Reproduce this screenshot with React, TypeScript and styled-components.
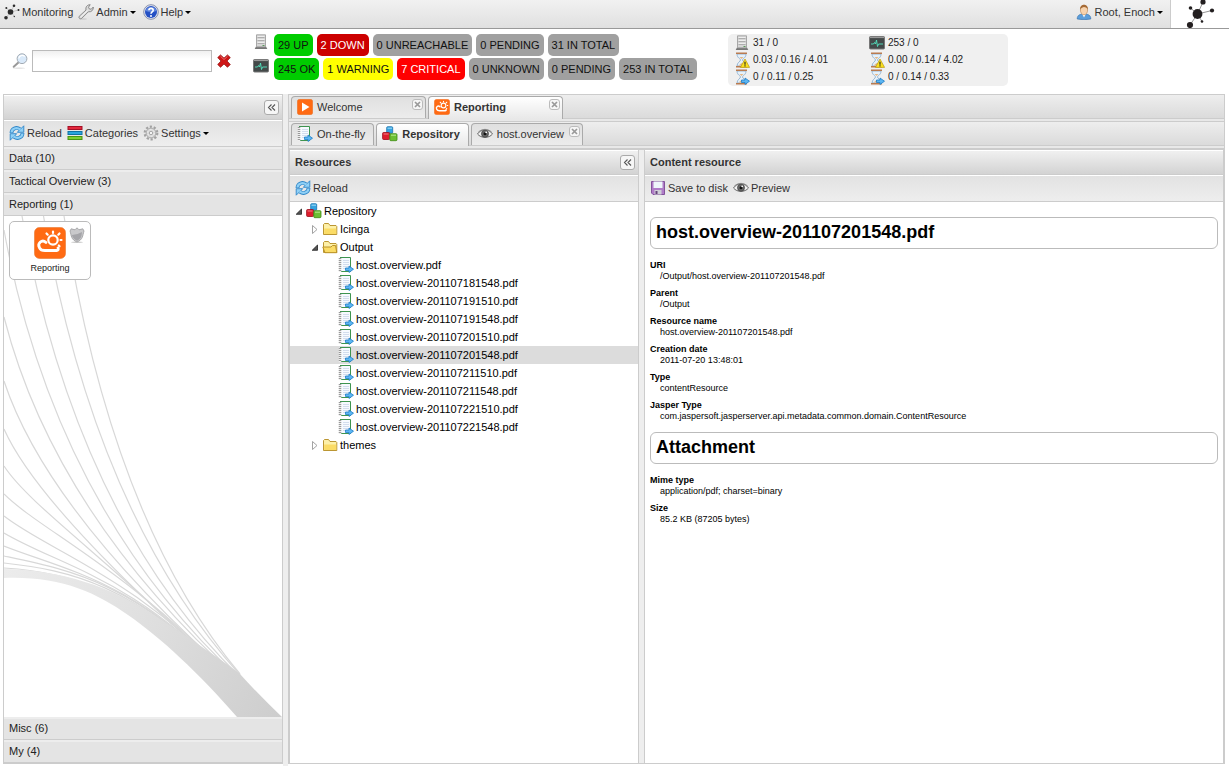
import React from "react";
import styled, { createGlobalStyle, css } from "styled-components";

const GlobalStyle = createGlobalStyle`
  *, *::before, *::after { box-sizing: border-box; }
  body {
    margin: 0;
    background: #fff;
    color: #222;
    font: 11px/14px "Liberation Sans", Arial, sans-serif;
  }
  button, input { font: inherit; color: inherit; }
  button {
    margin: 0;
    padding: 0;
    border: 0;
    background: none;
    cursor: pointer;
    white-space: nowrap;
  }
  svg { display: block; flex: none; }
  ul { list-style: none; margin: 0; padding: 0; }
`;

/* ---------- icons ---------- */

const Svg = ({ size = 16, box = "0 0 16 16", children }: { size?: number; box?: string; children: React.ReactNode }) => (
  <svg width={size} height={size} viewBox={box} fill="none" aria-hidden="true">
    {children}
  </svg>
);

const NetworkIcon = () => (
  <Svg>
    <path d="M7 8L10 1.500M7 8L14.500 6M7 8L2 13.500M7 8L2.500 4M7 8L10 12" stroke="#aaa" strokeWidth=".6" />
    <g fill="#2a2a2a">
      <circle cx="6.500" cy="8" r="2.800" />
      <circle cx="10" cy="1.800" r="1.300" />
      <circle cx="14.500" cy="6" r="1" />
      <circle cx="2" cy="13.800" r="1.800" />
      <circle cx="2.300" cy="4" r="1" />
      <circle cx="10.300" cy="12.500" r=".7" />
    </g>
  </Svg>
);

const BrandLogo = () => (
  <svg width="30" height="28" viewBox="0 0 30 28" fill="none" role="img" aria-label="Icinga">
    <path d="M11.500 14L17 2M11.500 14L26 10.500M11.500 14L4 25M11.500 14L4.500 8M11.500 14L16 21.500" stroke="#888" strokeWidth=".9" />
    <g fill="#231f20">
      <circle cx="11.500" cy="14" r="4.900" />
      <circle cx="17" cy="2" r="2.600" />
      <circle cx="26" cy="10.500" r="2.100" />
      <circle cx="4" cy="25" r="3.100" />
      <circle cx="4.500" cy="8" r="1.800" />
      <circle cx="16" cy="21.500" r="1.300" />
    </g>
  </svg>
);

const WrenchIcon = () => (
  <Svg>
    <ellipse cx="5" cy="15" rx="4" ry=".7" fill="#ccc" />
    <path d="M1.200 12.300L8 6C7.400 3 9 .8 12.200.7L10.500 3.200L11.400 5L13.300 5.200L15.300 3C15.600 6 13.500 8.200 10.300 7.800L3.600 14.500C2 15.400.2 13.800 1.200 12.300Z" fill="#dcdcdc" stroke="#808080" strokeWidth=".9" />
    <path d="M2.700 13L9.500 6.500" stroke="#f8f8f8" strokeWidth=".8" />
  </Svg>
);

const HelpIcon = () => (
  <Svg>
    <circle cx="8" cy="8" r="7.300" fill="#e4e8f2" stroke="#7c86a4" strokeWidth=".9" />
    <circle cx="8" cy="8" r="6" fill="#2450c4" />
    <path d="M2.600 7A5.500 5 0 0 1 13.400 7Q8 9 2.600 7Z" fill="#6087df" />
    <path d="M5.900 6.200C6 3.700 10.200 3.700 10.200 6.200C10.200 7.800 8 7.900 8 9.700" stroke="#fff" strokeWidth="1.600" />
    <circle cx="8" cy="11.900" r="1" fill="#fff" />
  </Svg>
);

const UserIcon = () => (
  <Svg>
    <path d="M1.200 15C1.200 11 4 10 8 10S14.800 11 14.800 15Q8 16.500 1.200 15Z" fill="#5b9edb" stroke="#2f6ca8" strokeWidth=".6" />
    <path d="M6.200 10L8 13.500L9.800 10Z" fill="#fff" />
    <ellipse cx="8" cy="6" rx="3.600" ry="4.800" fill="#f6d3ae" stroke="#b58250" strokeWidth=".6" />
    <path d="M4.100 5.600C3.500-.8 12.500-.8 11.900 5.600C11 3.200 9 3.300 8 3C7 3.500 5 3.600 4.100 5.600Z" fill="#a56a35" />
  </Svg>
);

const SearchIcon = () => (
  <Svg>
    <ellipse cx="7" cy="15.200" rx="6" ry=".6" fill="#ddd" />
    <path d="M6.400 9.500L1.700 13.800" stroke="#999" strokeWidth="2" strokeLinecap="round" />
    <circle cx="10" cy="5.700" r="4.900" fill="#d9e9f9" stroke="#a3abb3" />
    <path d="M6.800 5.500A3.400 3.400 0 0 1 12.700 3.500" stroke="#fff" strokeWidth="1.200" />
  </Svg>
);

const CrossIcon = () => (
  <Svg size={14}>
    <path d="M4 1L8 4.700L12 1L15.200 4.100L11.500 8L15.200 12L12 15.200L8 11.500L4 15.200L.8 12L4.500 8L.8 4.100Z" fill="#cf1717" stroke="#8d0c0c" strokeWidth=".8" />
    <path d="M4 2.600L8 6.300L12 2.600" stroke="#ee7a7a" strokeWidth="1" />
  </Svg>
);

const ServerIcon = () => (
  <Svg>
    <path d="M3 12.500H13L14.300 15H1.700Z" fill="#777" />
    <path d="M3.500.8H12.500V12.800H3.500Z" fill="#d6d6d6" stroke="#a0a0a0" strokeWidth=".9" />
    <path d="M4.500 3.500H11.500M4.500 6.500H11.500M4.500 9.500H11.500" stroke="#aeaeae" />
    <path d="M4.500 2.500H11.500M4.500 5.500H11.500M4.500 8.500H11.500" stroke="#eee" />
    <path d="M9.500 11.500H11.500" stroke="#5a9a5a" />
  </Svg>
);

const MonitorIcon = () => (
  <Svg>
    <rect x=".5" y="1.500" width="15" height="12.500" rx="1" fill="#434949" stroke="#777" />
    <path d="M1 2.500H15" stroke="#999" strokeWidth="1.200" />
    <path d="M2 9H4.500L5.500 7.500L6.500 9L7.500 5L8.500 11.500L9.500 9H14" stroke="#54e3bf" strokeWidth=".9" />
  </Svg>
);

const HourglassShape = () => (
  <>
    <path d="M3 2C3 6 6.500 6.500 6.500 8S3 10.500 3 14H12C12 10.500 8.500 9.500 8.500 8S12 6 12 2Z" fill="#e6f1fa" stroke="#8fb0cf" strokeWidth=".9" />
    <path d="M5.500 5H9.500L7.500 7ZM4.500 13.500L7.500 11L10.500 13.500Z" fill="#e4b98a" />
    <path d="M2 1.300H13M2 14.700H13" stroke="#b97b50" strokeWidth="1.500" />
  </>
);

const BlueArrow = () => (
  <path d="M7.500 11H11V9L15.500 12.200L11 15.500V13.500H7.500Z" fill="#5cb6f2" stroke="#1d7cc8" strokeWidth=".8" />
);

const HourglassWarningIcon = () => (
  <Svg>
    <HourglassShape />
    <path d="M11 7L15.600 15.400H6.400Z" fill="#fbe11c" stroke="#b89a12" strokeWidth=".7" />
    <path d="M11 9.700V12.700M11 13.300V14.500" stroke="#222" strokeWidth="1.100" />
  </Svg>
);

const HourglassArrowIcon = () => (
  <Svg>
    <HourglassShape />
    <BlueArrow />
  </Svg>
);

const ReloadIcon = () => (
  <Svg>
    <path d="M2.500 8C2.500 3.500 7.500 1.500 11 4.200M13.500 8C13.500 12.500 8.500 14.500 5 11.800" stroke="#2f86c8" strokeWidth="3.800" />
    <path d="M14.800.8V7.300H8.300ZM1.200 15.200V8.700H7.700Z" fill="#8fd0f6" stroke="#2f86c8" strokeWidth=".9" />
    <path d="M2.500 7.500C2.800 3.500 7.500 1.700 11.500 4.600M13.500 8.500C13.200 12.500 8.500 14.300 4.500 11.400" stroke="#8fd0f6" strokeWidth="2.200" />
  </Svg>
);

const CategoriesIcon = () => (
  <Svg>
    <rect x="1" y="1.500" width="14" height="3" fill="#e3283c" stroke="#a50f25" />
    <rect x="1" y="6.500" width="14" height="3" fill="#2aa5dc" stroke="#1173a4" />
    <rect x="1" y="11.500" width="14" height="3" fill="#7ed032" stroke="#4b9414" />
  </Svg>
);

const GearIcon = () => (
  <Svg>
    <circle cx="8" cy="8" r="6.300" stroke="#a2a2a2" strokeWidth="2.200" strokeDasharray="2.200 1.758" />
    <circle cx="8" cy="8" r="4.900" fill="#d8d8d8" stroke="#aaa" />
    <circle cx="8" cy="8" r="3.300" stroke="#f2f2f2" strokeWidth=".9" strokeDasharray="2 1.450" />
    <circle cx="8" cy="8" r="1.700" fill="#f4f4f4" stroke="#999" strokeWidth=".8" />
  </Svg>
);

const ShieldIcon = () => (
  <Svg>
    <ellipse cx="8" cy="15.200" rx="6" ry=".7" fill="#ccc" />
    <path d="M8 .8L10 2.800L13.800 1.800L15 4C13.500 9 14 12.500 8 15C2 12.500 2.500 9 1 4L2.200 1.800L6 2.800Z" fill="#c9c9cb" stroke="#9b9b9d" strokeWidth=".8" />
    <path d="M3 8Q8 8 13 5C12.500 9.500 12.500 11.500 8 13.700C4 11.700 3.500 10 3 8Z" fill="#a5a5a9" />
  </Svg>
);

const WeatherIcon = ({ size }: { size: number }) => (
  <Svg size={size} box="0 0 32 32">
    <rect x=".5" y=".5" width="31" height="31" rx="5" fill="#ff6a13" stroke="#e8772f" strokeWidth=".6" />
    <g stroke="#fff" strokeWidth="2.200" strokeLinecap="round">
      <circle cx="19" cy="13" r="4.700" />
      <path d="M19 4.500V6M12.500 6.500L13.700 7.700M25.500 6.500L24.300 7.700M26.500 13H27.500M24.800 18.500L25.500 19.300" />
      <path d="M12 15.500C8 11.500 3 16.500 5.500 20.800C6.500 23 9 23.500 11 23.500H22.500C24 23.300 24.800 22.300 24 21" strokeWidth="2.800" />
    </g>
  </Svg>
);

const PlayIcon = () => (
  <Svg>
    <rect x=".3" y=".3" width="15.400" height="15.400" rx="2.500" fill="#ff6a13" stroke="#e8772f" strokeWidth=".6" />
    <path d="M5 3.500L12.500 8L5 12.500Z" fill="#fff" />
  </Svg>
);

const NotebookIcon = () => (
  <Svg>
    <path d="M1.500.5H12.500V14.500H1.500Z" fill="#f7faff" />
    <path d="M2 .5H12.500V14.500H2" stroke="#3e9450" />
    <path d="M5 3.500H11M5 5.500H11M5 7.500H11M5 9.500H11M5 11.500H8" stroke="#d3ddee" />
    <path d="M2 1V15" stroke="#eee" strokeWidth="2.500" />
    <path d="M2 1V15" stroke="#999" strokeWidth="2.500" strokeDasharray="1 1" />
    <BlueArrow />
  </Svg>
);

const CubesIcon = () => (
  <Svg>
    <rect x="4.700" y=".7" width="6" height="6.500" rx="1" fill="#35a4e0" stroke="#1b74b0" strokeWidth=".8" />
    <rect x=".6" y="6.500" width="7" height="7" rx="1" fill="#dd1f2d" stroke="#9a0d1c" strokeWidth=".8" />
    <rect x="7.800" y="7.700" width="7.200" height="7" rx="1" fill="#6cbf33" stroke="#3f8a14" strokeWidth=".8" />
    <path d="M5.500 2.200H10" stroke="#a3dbf7" />
    <path d="M1.600 8H6.500" stroke="#f28088" />
    <path d="M9 9.200H14" stroke="#b9e88e" />
  </Svg>
);

const EyeIcon = () => (
  <Svg>
    <path d="M.5 8C4 2.500 12 2.500 15.500 8C12 12.500 4 12.500 .5 8Z" fill="#f2f2f2" stroke="#666" />
    <path d="M1 6.500C4.500 2.300 11.500 2.300 15 6.500" stroke="#888" strokeWidth=".8" />
    <circle cx="8" cy="7.700" r="3.500" fill="#6a6a6a" stroke="#444" strokeWidth=".8" />
    <circle cx="8" cy="7.700" r="1.500" fill="#111" />
    <circle cx="9.200" cy="6.300" r=".9" fill="#fff" />
  </Svg>
);

const FloppyIcon = () => (
  <Svg>
    <path d="M1.500 1.500H14.500V14.500H3L1.500 13Z" fill="#b07cc8" stroke="#7b4a94" strokeWidth=".9" />
    <rect x="3.500" y="1.500" width="9" height="6.500" fill="#eef6fa" />
    <rect x="4.500" y="10" width="7" height="4.500" fill="#cfcfd6" />
    <rect x="5.500" y="11" width="2" height="3" fill="#64437a" />
  </Svg>
);

const FolderIcon = ({ open }: { open?: boolean }) => (
  <Svg>
    <path d="M1.500 13.500V3.500L2.500 2.500H6.500L8 4.500H14L14.800 5.500V13.500Z" fill="#fdf0a8" stroke="#b38a20" strokeWidth=".9" />
    {open ? (
      <path d="M.8 8H9L10.500 6.500H13.500L14.800 13.700H3Z" fill="#fbdc66" stroke="#b38a20" strokeWidth=".9" />
    ) : (
      <path d="M2.200 7.500H14.200V13H2.200Z" fill="#fbdc66" />
    )}
  </Svg>
);

const ExpanderIcon = ({ open }: { open?: boolean }) => (
  <Svg>
    {open ? (
      <path d="M11.500 6V11.300H6.200Z" fill="#555" stroke="#222" strokeWidth=".8" />
    ) : (
      <path d="M6.500 4.500L11 8.500L6.500 12.500Z" fill="#fff" stroke="#999" strokeWidth=".9" />
    )}
  </Svg>
);

const CollapseIcon = () => (
  <Svg size={9} box="0 0 9 9">
    <path d="M4.500 1.500L1.500 4.500L4.500 7.500M8 1.500L5 4.500L8 7.500" stroke="#555" strokeWidth="1.100" />
  </Svg>
);

const SmallCloseIcon = () => (
  <Svg size={7} box="0 0 7 7">
    <path d="M1 1L6 6M6 1L1 6" stroke="#999" strokeWidth="1.700" />
  </Svg>
);

/* ---------- shared parts ---------- */

const line = "#ccc";

const Page = styled.div`
  display: flex;
  flex-direction: column;
  min-height: 100vh;
`;

const ToolButton = styled.button<{ $menu?: boolean }>`
  display: flex;
  align-items: center;
  gap: 2px;
  color: #333;
  ${(p) =>
    p.$menu &&
    css`
      padding-right: 2px;
      &::after {
        content: "";
        border: 3px solid transparent;
        border-top-color: #000;
        border-bottom: 0;
      }
    `}
`;

const Toolbar = styled.div`
  display: flex;
  align-items: center;
  gap: 5px;
  height: 27px;
  padding: 0 5px 1px;
  border-top: 1px solid #fff;
  border-bottom: 1px solid ${line};
  background: linear-gradient(#e2e2e2, #eeeeee);
`;

const PanelHeader = styled.header`
  display: flex;
  align-items: center;
  justify-content: space-between;
  height: 25px;
  padding: 0 3px 0 5px;
  border-top: 1px solid #fff;
  border-bottom: 1px solid ${line};
  background: linear-gradient(#f0f0f0, #d3d3d3);
`;

const PanelTitle = styled.h2`
  margin: 0;
  padding-bottom: 2px;
  font-size: 11px;
  line-height: 14px;
  color: #333;
`;

const CollapseButton = styled.button`
  display: grid;
  place-items: center;
  width: 15px;
  height: 15px;
  margin-left: auto;
  border: 1px solid #aaa;
  border-radius: 3px;
  background: #f6f6f6;
`;

/* ---------- top bar ---------- */

const TopBar = styled.nav`
  display: flex;
  height: 29px;
  border-bottom: 1px solid #999;
  background: linear-gradient(#f1f1f1, #e0e0e0);
`;

const MenuGroup = styled.div`
  display: flex;
  align-items: center;
  gap: 5px;
  padding: 0 4px 4px;
  &:nth-child(2) {
    margin-left: auto;
    padding-right: 5px;
  }
`;

const Brand = styled.div`
  width: 59px;
  padding-left: 15px;
  border-left: 1px solid ${line};
  background: #fff;
`;

/* ---------- status header ---------- */

const StatusHeader = styled.header`
  display: flex;
  height: 65px;
  padding: 5px 12px 0;
`;

const SearchForm = styled.form`
  display: flex;
  align-items: center;
  gap: 4px;
  width: 241px;
  height: 54px;
`;

const SearchInput = styled.input`
  width: 180px;
  height: 22px;
  margin-right: 1px;
  border: 1px solid #bbb;
  padding: 1px 3px;
  background: linear-gradient(#f0f0f0, #fff 8px);
`;

const Summary = styled.div`
  display: flex;
  flex-direction: column;
  gap: 2px;
  width: 475px;
`;

const SummaryRow = styled.div`
  display: flex;
  gap: 4px;
  height: 22px;
  > svg {
    margin-right: 1px;
  }
`;

const badgeTones = {
  ok: ["#00cc00", "#111"],
  down: ["#cc0000", "#fff"],
  warning: ["#ffff00", "#111"],
  critical: ["#ff0000", "#fff"],
  muted: ["#a0a0a0", "#111"],
} as const;

const Badge = styled.button<{ $tone: keyof typeof badgeTones }>`
  padding: 0 4px;
  border-radius: 5px;
  background: ${(p) => badgeTones[p.$tone][0]};
  color: ${(p) => badgeTones[p.$tone][1]};
`;

const Performance = styled.div`
  display: grid;
  grid-template-columns: 135px 1fr;
  grid-auto-rows: 17px;
  width: 280px;
  height: 52px;
  padding: 0 6px;
  border-radius: 5px;
  background: #f0f0f0;
  font-size: 10px;
`;

const Metric = styled.span`
  display: flex;
  align-items: center;
  gap: 3px;
`;

/* ---------- frame ---------- */

const Main = styled.main`
  display: grid;
  grid-template-columns: 280px minmax(0, 1fr);
  gap: 5px;
  flex: 1;
  padding: 0 4px 2px 3px;
  background: linear-gradient(#eee, #eee) 283px 0 / 5px 100% no-repeat;
`;

const Sidebar = styled.aside`
  display: flex;
  flex-direction: column;
  border: 1px solid ${line};
`;

const AccordionRow = styled.button`
  flex: none;
  height: 23px;
  padding: 0 5px 2px;
  border-top: 2px solid #ededed;
  border-bottom: 1px solid ${line};
  background: #e4e4e4;
  text-align: left;
`;

const CronkBody = styled.div`
  position: relative;
  flex: 1;
  padding: 5px;
  overflow: hidden;
`;

const Strands = styled.svg`
  position: absolute;
  left: 0;
  bottom: 0;
`;

const Cronk = styled.button`
  position: relative;
  display: flex;
  flex-direction: column;
  align-items: center;
  gap: 2px;
  width: 82px;
  height: 59px;
  padding-top: 5px;
  border: 1px solid #bbb;
  border-radius: 5px;
  background: #fff;
  font-size: 9px;
`;

const CronkMark = styled.span`
  position: absolute;
  top: 5px;
  right: 5px;
`;

const Content = styled.section`
  display: flex;
  flex-direction: column;
  min-width: 0;
  border: 1px solid ${line};
`;

const TabStrip = styled.div<{ $deep?: boolean }>`
  display: flex;
  flex: none;
  align-items: flex-end;
  gap: 2px;
  height: ${(p) => (p.$deep ? 28 : 27)}px;
  padding: 0 2px 3px;
  border-bottom: ${(p) => (p.$deep ? 2 : 1)}px solid ${line};
  background:
    linear-gradient(#e8e8e8, #e8e8e8) 0 100% / 100% 2px no-repeat,
    linear-gradient(${line}, ${line}) 0 calc(100% - 2px) / 100% 1px no-repeat,
    linear-gradient(#eeeeee, #d8d8d8);
`;

const Tab = styled.div<{ $active?: boolean; $wide?: boolean }>`
  display: flex;
  align-items: center;
  gap: 3px;
  height: ${(p) => (p.$active ? 23 : 22)}px;
  margin-bottom: ${(p) => (p.$active ? -1 : 0)}px;
  min-width: ${(p) => (p.$wide ? 135 : 0)}px;
  padding: 0 2px 0 5px;
  border: 1px solid #aaa;
  border-bottom: 0;
  border-radius: 4px 4px 0 0;
  background: ${(p) => (p.$active ? "linear-gradient(#fff, #e8e8e8)" : "linear-gradient(#e0e0e0, #ececec)")};
`;

const TabButton = styled.button<{ $active?: boolean; $plain?: boolean }>`
  display: flex;
  align-items: center;
  gap: 4px;
  padding: 0 ${(p) => (p.$plain ? 6 : 2)}px 2px 0;
  color: #333;
  font-weight: ${(p) => (p.$active ? "bold" : "normal")};
`;

const TabClose = styled.button`
  display: grid;
  place-items: center;
  align-self: flex-start;
  width: 11px;
  height: 11px;
  margin: 2px 0 0 auto;
  border: 1px solid #bbb;
  border-radius: 3px;
  background: #f6f6f6;
`;

const Columns = styled.div`
  display: grid;
  grid-template-columns: 349px minmax(0, 1fr);
  gap: 5px;
  flex: 1;
  border: 0 solid ${line};
  border-width: 0 1px;
  background: #eee;
`;

const Panel = styled.section<{ $side: "left" | "right" }>`
  display: flex;
  flex-direction: column;
  background: #fff;
  border-${(p) => (p.$side === "left" ? "right" : "left")}: 1px solid ${line};
`;

const TreeRow = styled.button<{ $level: number; $selected?: boolean }>`
  display: flex;
  align-items: center;
  width: 100%;
  height: 18px;
  padding-left: ${(p) => p.$level * 16}px;
  background: ${(p) => (p.$selected ? "#dcdcdc" : "none")};
  color: #000;
`;

const TreeLabel = styled.span`
  padding-left: 2px;
`;

const Blank = styled.span`
  width: 16px;
`;

const Details = styled.div`
  padding: 15px 5px 0;
  color: #000;
`;

const DetailTitle = styled.h1`
  margin: 0;
  padding: 0 5px 2px;
  border: 1px solid #bbb;
  border-radius: 6px;
  font-size: 18px;
  line-height: 28px;
`;

const Fields = styled.dl`
  display: grid;
  gap: 6px;
  margin: 11px 0 10px;
  font-size: 9px;
  line-height: 11px;
  dt {
    font-weight: bold;
  }
  dd {
    margin: 0 0 0 10px;
  }
`;

/* ---------- data ---------- */

type Tone = keyof typeof badgeTones;

const hostBadges: [string, Tone][] = [
  ["29 UP", "ok"],
  ["2 DOWN", "down"],
  ["0 UNREACHABLE", "muted"],
  ["0 PENDING", "muted"],
  ["31 IN TOTAL", "muted"],
];

const serviceBadges: [string, Tone][] = [
  ["245 OK", "ok"],
  ["1 WARNING", "warning"],
  ["7 CRITICAL", "critical"],
  ["0 UNKNOWN", "muted"],
  ["0 PENDING", "muted"],
  ["253 IN TOTAL", "muted"],
];

const files = [
  "host.overview.pdf",
  "host.overview-201107181548.pdf",
  "host.overview-201107191510.pdf",
  "host.overview-201107191548.pdf",
  "host.overview-201107201510.pdf",
  "host.overview-201107201548.pdf",
  "host.overview-201107211510.pdf",
  "host.overview-201107211548.pdf",
  "host.overview-201107221510.pdf",
  "host.overview-201107221548.pdf",
];

const selectedFile = "host.overview-201107201548.pdf";

const resourceFields = [
  ["URI", "/Output/host.overview-201107201548.pdf"],
  ["Parent", "/Output"],
  ["Resource name", selectedFile],
  ["Creation date", "2011-07-20 13:48:01"],
  ["Type", "contentResource"],
  ["Jasper Type", "com.jaspersoft.jasperserver.api.metadata.common.domain.ContentResource"],
];

const attachmentFields = [
  ["Mime type", "application/pdf; charset=binary"],
  ["Size", "85.2 KB (87205 bytes)"],
];

const strandPaths = [
  "M64 216Q111 520 240 674",
  "M43.500 216Q94 512 240 675",
  "M22 216Q75 515 240 677",
  "M4 230Q55 508 240 679",
  "M4 317Q54 513 240 681",
  "M4 381Q48 514 240 683",
  "M4 429Q41 512 238 683",
  "M4 466C30 506 110 560 236 683",
  "M4 494C40 530 130 570 234 682",
  "M4 516C50 552 135 576 232 681",
  "M4 533C60 566 135 578 230 680",
  "M4 546C65 570 135 580 228 679",
  "M4 556C70 570 135 582 226 678",
  "M4 563C70 570 135 585 224 677",
  "M4 568C70 572 135 590 222 676",
];

/* ---------- views ---------- */

const FieldList = ({ items }: { items: string[][] }) => (
  <Fields>
    {items.map(([name, value]) => (
      <div key={name}>
        <dt>{name}</dt>
        <dd>{value}</dd>
      </div>
    ))}
  </Fields>
);

const Background = () => (
  <Strands width="278" height="501" viewBox="4 216 278 501" fill="none" aria-hidden="true">
    <defs>
      <linearGradient id="band" x1="4" y1="570" x2="282" y2="717" gradientUnits="userSpaceOnUse">
        <stop offset="0" stopColor="#ececec" />
        <stop offset=".45" stopColor="#e0e0e0" />
        <stop offset="1" stopColor="#cdcdcd" />
      </linearGradient>
    </defs>
    {strandPaths.map((d) => (
      <path key={d} d={d} stroke="#d8d8d8" strokeWidth="1.200" />
    ))}
    <path d="M4 569C60 570 110 585 160 619C195 642 222 660 240 674Q258 694 282 717H237C200 674 160 637 128 615C95 592 60 576 4 578Z" fill="url(#band)" />
  </Strands>
);

export default function App() {
  return (
    <Page>
      <GlobalStyle />
      <TopBar>
        <MenuGroup>
          <ToolButton><NetworkIcon />Monitoring</ToolButton>
          <ToolButton $menu><WrenchIcon />Admin</ToolButton>
          <ToolButton $menu><HelpIcon />Help</ToolButton>
        </MenuGroup>
        <MenuGroup>
          <ToolButton $menu><UserIcon />Root, Enoch</ToolButton>
        </MenuGroup>
        <Brand><BrandLogo /></Brand>
      </TopBar>

      <StatusHeader>
        <SearchForm onSubmit={(e) => e.preventDefault()}>
          <SearchIcon />
          <SearchInput type="text" aria-label="Search" />
          <button type="reset" aria-label="Clear search"><CrossIcon /></button>
        </SearchForm>
        <Summary>
          <SummaryRow>
            <ServerIcon />
            {hostBadges.map(([text, tone]) => <Badge key={text} $tone={tone}>{text}</Badge>)}
          </SummaryRow>
          <SummaryRow>
            <MonitorIcon />
            {serviceBadges.map(([text, tone]) => <Badge key={text} $tone={tone}>{text}</Badge>)}
          </SummaryRow>
        </Summary>
        <Performance>
          <Metric><ServerIcon />31 / 0</Metric>
          <Metric><MonitorIcon />253 / 0</Metric>
          <Metric><HourglassWarningIcon />0.03 / 0.16 / 4.01</Metric>
          <Metric><HourglassWarningIcon />0.00 / 0.14 / 4.02</Metric>
          <Metric><HourglassArrowIcon />0 / 0.11 / 0.25</Metric>
          <Metric><HourglassArrowIcon />0 / 0.14 / 0.33</Metric>
        </Performance>
      </StatusHeader>

      <Main>
        <Sidebar>
          <PanelHeader>
            <CollapseButton aria-label="Collapse sidebar"><CollapseIcon /></CollapseButton>
          </PanelHeader>
          <Toolbar>
            <ToolButton><ReloadIcon />Reload</ToolButton>
            <ToolButton><CategoriesIcon />Categories</ToolButton>
            <ToolButton $menu><GearIcon />Settings</ToolButton>
          </Toolbar>
          <AccordionRow>Data (10)</AccordionRow>
          <AccordionRow>Tactical Overview (3)</AccordionRow>
          <AccordionRow aria-expanded="true">Reporting (1)</AccordionRow>
          <CronkBody>
            <Background />
            <Cronk>
              <WeatherIcon size={32} />
              Reporting
              <CronkMark><ShieldIcon /></CronkMark>
            </Cronk>
          </CronkBody>
          <AccordionRow>Misc (6)</AccordionRow>
          <AccordionRow>My (4)</AccordionRow>
        </Sidebar>

        <Content>
          <TabStrip>
            <Tab $wide>
              <TabButton><PlayIcon />Welcome</TabButton>
              <TabClose aria-label="Close Welcome"><SmallCloseIcon /></TabClose>
            </Tab>
            <Tab $wide $active>
              <TabButton $active><WeatherIcon size={16} />Reporting</TabButton>
              <TabClose aria-label="Close Reporting"><SmallCloseIcon /></TabClose>
            </Tab>
          </TabStrip>
          <TabStrip $deep>
            <Tab>
              <TabButton $plain><NotebookIcon />On-the-fly</TabButton>
            </Tab>
            <Tab $active>
              <TabButton $plain $active><CubesIcon />Repository</TabButton>
            </Tab>
            <Tab>
              <TabButton><EyeIcon />host.overview</TabButton>
              <TabClose aria-label="Close host.overview"><SmallCloseIcon /></TabClose>
            </Tab>
          </TabStrip>

          <Columns>
            <Panel $side="left">
              <PanelHeader>
                <PanelTitle>Resources</PanelTitle>
                <CollapseButton aria-label="Collapse resources"><CollapseIcon /></CollapseButton>
              </PanelHeader>
              <Toolbar>
                <ToolButton><ReloadIcon />Reload</ToolButton>
              </Toolbar>
              <ul>
                <li><TreeRow $level={0}><ExpanderIcon open /><CubesIcon /><TreeLabel>Repository</TreeLabel></TreeRow></li>
                <li><TreeRow $level={1}><ExpanderIcon /><FolderIcon /><TreeLabel>Icinga</TreeLabel></TreeRow></li>
                <li><TreeRow $level={1}><ExpanderIcon open /><FolderIcon open /><TreeLabel>Output</TreeLabel></TreeRow></li>
                {files.map((name) => (
                  <li key={name}>
                    <TreeRow $level={2} $selected={name === selectedFile}>
                      <Blank /><NotebookIcon /><TreeLabel>{name}</TreeLabel>
                    </TreeRow>
                  </li>
                ))}
                <li><TreeRow $level={1}><ExpanderIcon /><FolderIcon /><TreeLabel>themes</TreeLabel></TreeRow></li>
              </ul>
            </Panel>

            <Panel $side="right">
              <PanelHeader><PanelTitle>Content resource</PanelTitle></PanelHeader>
              <Toolbar>
                <ToolButton><FloppyIcon />Save to disk</ToolButton>
                <ToolButton><EyeIcon />Preview</ToolButton>
              </Toolbar>
              <Details>
                <DetailTitle>{selectedFile}</DetailTitle>
                <FieldList items={resourceFields} />
                <DetailTitle as="h2">Attachment</DetailTitle>
                <FieldList items={attachmentFields} />
              </Details>
            </Panel>
          </Columns>
        </Content>
      </Main>
    </Page>
  );
}
